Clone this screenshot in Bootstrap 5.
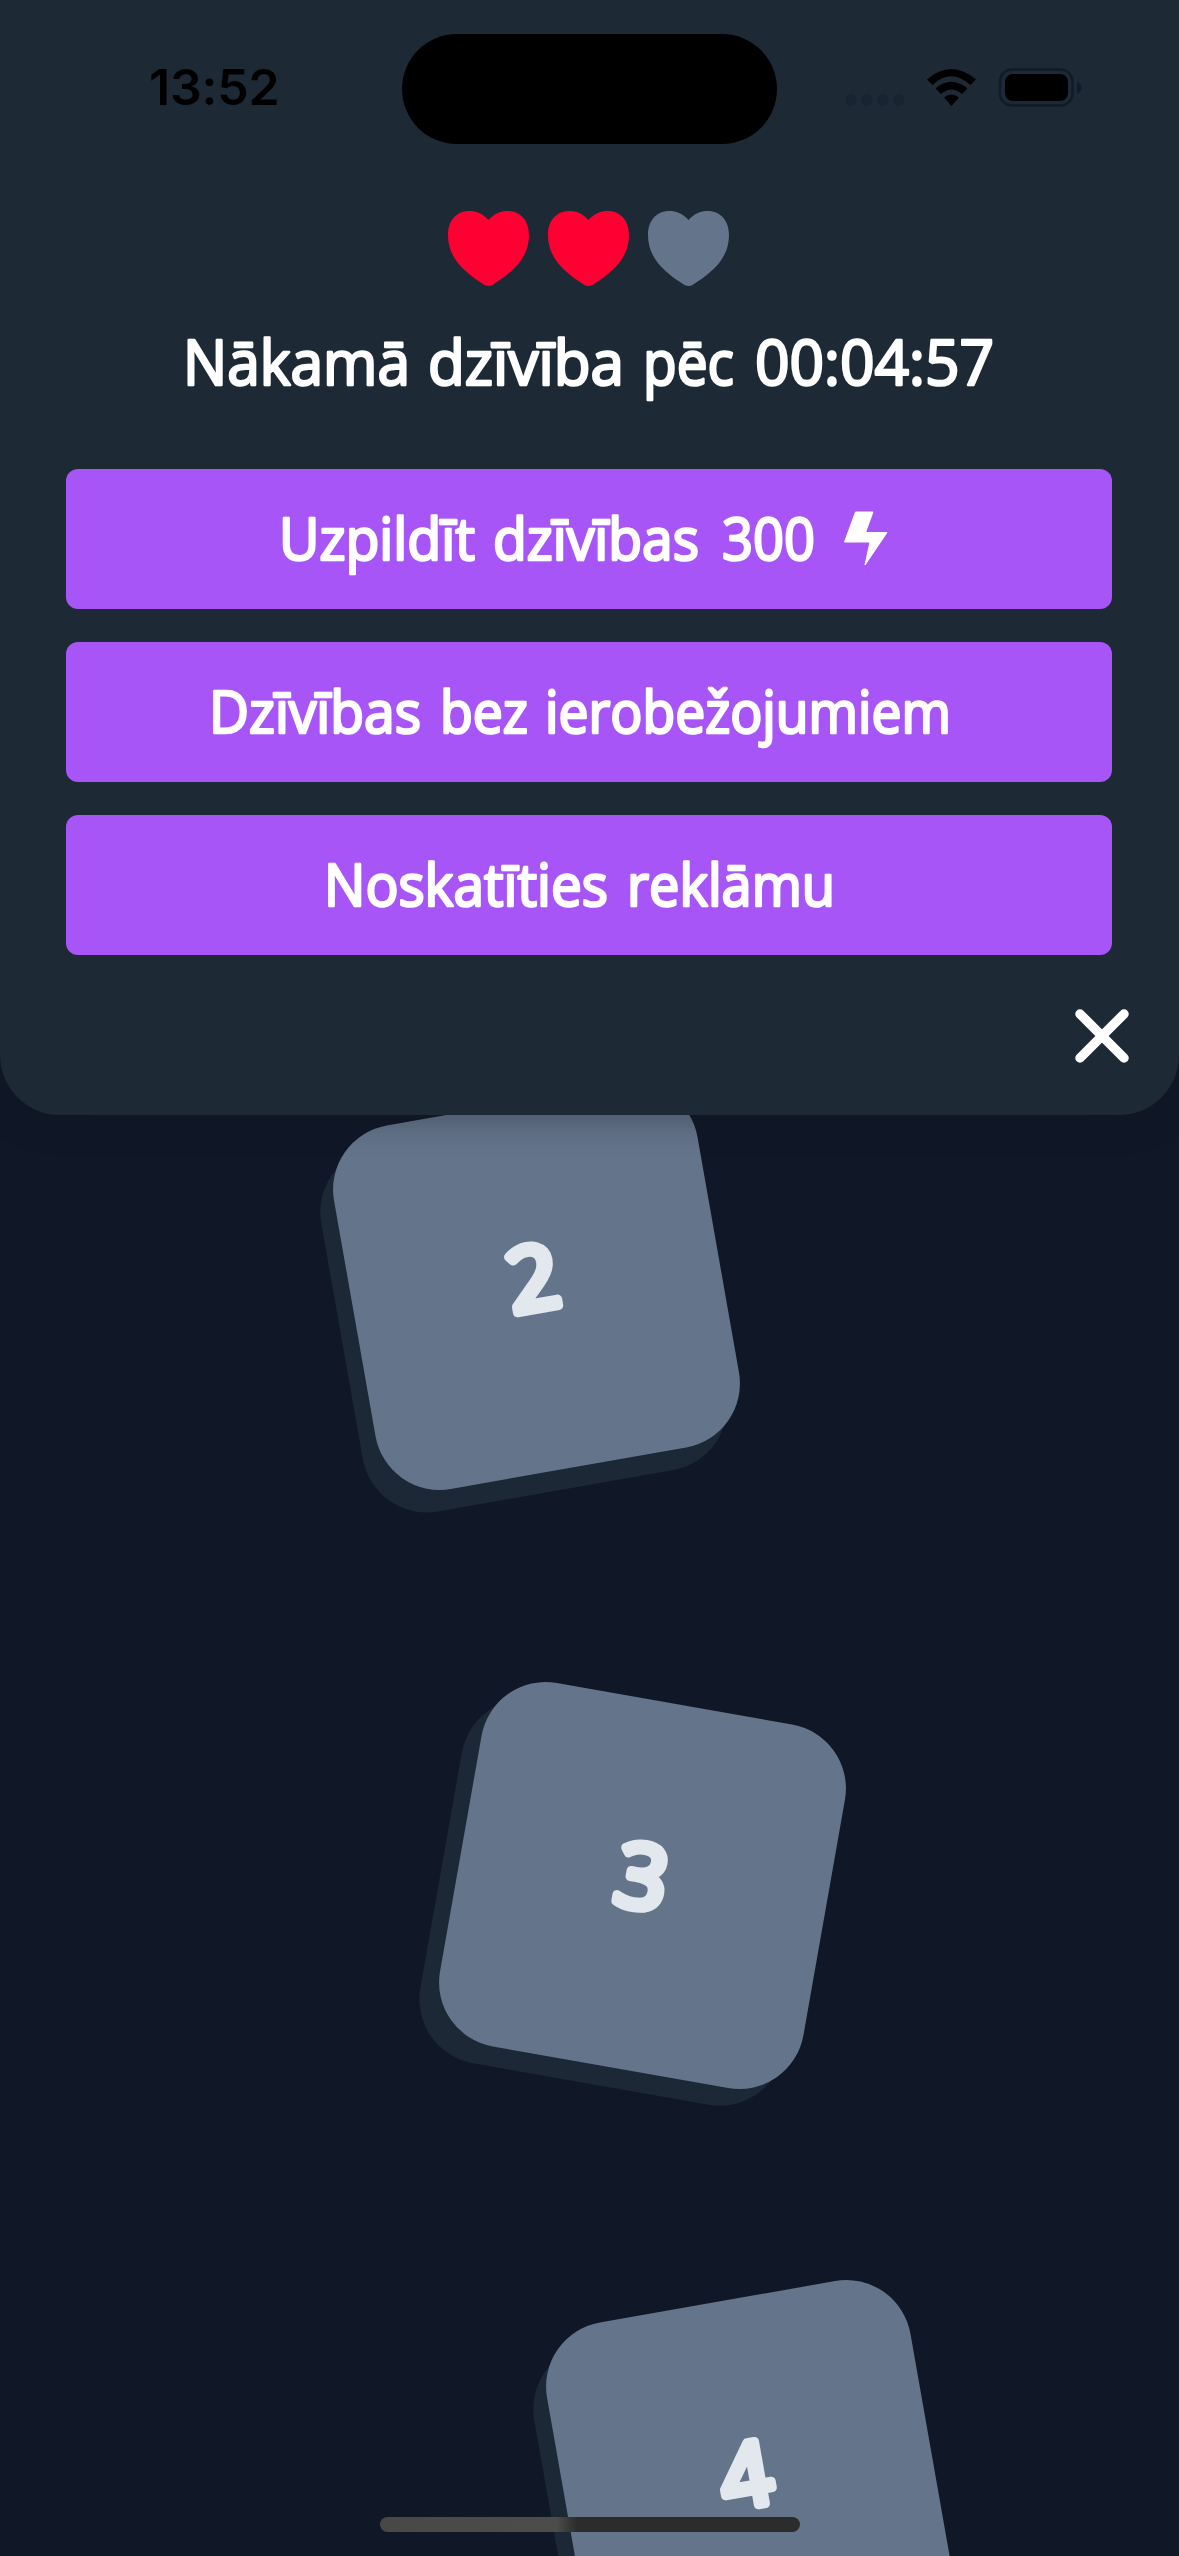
<!DOCTYPE html>
<html lang="lv">
<head>
<meta charset="utf-8">
<meta name="viewport" content="width=device-width, initial-scale=1">
<title>Dzīvības</title>
<link href="https://cdn.jsdelivr.net/npm/bootstrap@5.3.0/dist/css/bootstrap.min.css" rel="stylesheet">
<style>
  body { background: #101726; font-family: "Open Sans", "Noto Sans", sans-serif; }
  .game { width: 1179px; height: 2556px; background: #101726; }
  .life-panel { height: 1115px; background: #1e2936; border-radius: 0 0 60px 60px; box-shadow: 0 4px 34px rgba(16, 23, 32, .36); z-index: 2; }
  .status { height: 211px; padding: 34px 98px 0 149px; }
  .clock { font: 600 50px/1 Inter, sans-serif; color: #000; width: 253px; height: 110px; padding-top: 28px; letter-spacing: -.2px; }
  .island { width: 375px; height: 110px; background: #000; }
  .hearts { gap: 19px; height: 75px; padding-right: 2px; }
  .timer { height: 183px; }
  .actions { gap: 33px; padding: 0 67px 0 66px; }
  .btn-life { height: 140px; border: 0; border-radius: 12px; background: #a855f7; --bs-btn-hover-bg: #a855f7; padding: 0; }
  .foot { padding: 48px 44px 0 0; }
  .close-btn { border: 0; background: none; padding: 0; width: 66px; height: 66px; }
  text { font-family: "Open Sans", "Noto Sans", sans-serif; font-weight: 400; fill: #fff; stroke: #fff; stroke-width: 2.6; stroke-linejoin: round; stroke-linecap: round; }
  svg { display: block; overflow: visible; }
  .tile { width: 369px; height: 369px; border-radius: 65px; background: #64748b; box-shadow: -16.5px 20px 0 #1c2836; transform: rotate(-10deg); }
  .tile text { fill: #e2e8ee; stroke: #e2e8ee; stroke-width: 9; }
  .tile-2 { left: 352px; top: 1101.5px; }
  .tile-3 { left: 458px; top: 1701px; transform: rotate(10deg); }
  .tile-4 { left: 565px; top: 2299px; }
  .home-bar { left: 380px; top: 2517px; width: 420px; height: 15px; background: linear-gradient(90deg, #484947 0, #4c4d4a 42%, #2b2c2b 47%); z-index: 3; }
</style>
</head>
<body>
<main class="game position-relative overflow-hidden">
  <section class="life-panel position-relative">
    <div class="status d-flex align-items-start">
      <div class="clock">13:52</div>
      <div class="island rounded-pill"></div>
      <svg class="ms-auto" width="240" height="110" viewBox="841 34 240 110">
        <g fill="#192230"><circle cx="851" cy="100" r="5.5"/><circle cx="867" cy="100" r="5.5"/><circle cx="883" cy="100" r="5.5"/><circle cx="899" cy="100" r="5.5"/></g>
        <path d="M927 79.5Q951 58.500 976 79.500L970.500 85Q951 67.500 932.500 85ZM935.500 88.500Q951 75 967.500 88.500L962 94Q951 85 941 94ZM944 97.500Q951.500 91.500 959 97.500L951.500 106Z"/>
        <rect x="1000" y="69.500" width="72.500" height="36" rx="12" fill="none" stroke="#111a2a" stroke-width="2.500"/>
        <rect x="1005" y="74" width="63" height="27" rx="8"/>
        <path d="M1077 81.500Q1081.500 83.500 1081.500 87.500T1077 94Z" fill="#111a2a"/>
      </svg>
    </div>
    <div class="hearts d-flex justify-content-center">
      <svg width="81" height="75" viewBox="0 0 81 75"><path fill="#ff0033" d="M40.500 9C34 2 28 0 21.500 0C8 0 0 10 0 24C0 47 16 61 36.500 74Q40.500 76 44.500 74C65 61 81 47 81 24C81 10 73 0 59.500 0C53 0 47 2 40.500 9Z"/></svg>
      <svg width="81" height="75" viewBox="0 0 81 75"><path fill="#ff0033" d="M40.500 9C34 2 28 0 21.500 0C8 0 0 10 0 24C0 47 16 61 36.500 74Q40.500 76 44.500 74C65 61 81 47 81 24C81 10 73 0 59.500 0C53 0 47 2 40.500 9Z"/></svg>
      <svg width="81" height="75" viewBox="0 0 81 75"><path fill="#64748b" d="M40.500 9C34 2 28 0 21.500 0C8 0 0 10 0 24C0 47 16 61 36.500 74Q40.500 76 44.500 74C65 61 81 47 81 24C81 10 73 0 59.500 0C53 0 47 2 40.500 9Z"/></svg>
    </div>
    <div class="timer d-flex justify-content-center">
      <svg width="810" height="120" font-size="63">
        <text x="-2" y="99" textLength="227" lengthAdjust="spacingAndGlyphs">Nākamā</text>
        <text x="243" y="99" textLength="196" lengthAdjust="spacingAndGlyphs">dzīvība</text>
        <text x="458" y="99" textLength="91" lengthAdjust="spacingAndGlyphs">pēc</text>
        <text x="570" y="99" textLength="239" lengthAdjust="spacingAndGlyphs">00:04:57</text>
      </svg>
    </div>
    <div class="actions d-flex flex-column">
      <button class="btn btn-life">
        <svg width="1046" height="140" font-size="58">
          <text x="213" y="91" textLength="196" lengthAdjust="spacingAndGlyphs">Uzpildīt</text>
          <text x="427" y="91" textLength="206" lengthAdjust="spacingAndGlyphs">dzīvības</text>
          <text x="656" y="91" textLength="93" lengthAdjust="spacingAndGlyphs">300</text>
          <path fill="#fff" stroke="#fff" stroke-width="1" stroke-linejoin="round" d="M789.500 43H807L799.500 63.500H821L799 96L804 73H778.500Z"/>
        </svg>
      </button>
      <button class="btn btn-life">
        <svg width="1046" height="140" font-size="58">
          <text x="143" y="91" textLength="212" lengthAdjust="spacingAndGlyphs">Dzīvības</text>
          <text x="374" y="91" textLength="88" lengthAdjust="spacingAndGlyphs">bez</text>
          <text x="479" y="91" textLength="406" lengthAdjust="spacingAndGlyphs">ierobežojumiem</text>
        </svg>
      </button>
      <button class="btn btn-life">
        <svg width="1046" height="140" font-size="58">
          <text x="258" y="91" textLength="284" lengthAdjust="spacingAndGlyphs">Noskatīties</text>
          <text x="561" y="91" textLength="208" lengthAdjust="spacingAndGlyphs">reklāmu</text>
        </svg>
      </button>
    </div>
    <div class="foot d-flex justify-content-end">
      <button class="close-btn" aria-label="Aizvērt"><svg width="66" height="66"><path d="M11 11 55 55M55 11 11 55" fill="none" stroke="#fff" stroke-width="9.500" stroke-linecap="round"/></svg></button>
    </div>
  </section>
  <div class="tile tile-2 position-absolute"><svg width="369" height="369"><text x="157" y="207" font-size="88" textLength="51" lengthAdjust="spacingAndGlyphs">2</text></svg></div>
  <div class="tile tile-3 position-absolute"><svg width="369" height="369"><text x="157" y="207" font-size="88" textLength="51" lengthAdjust="spacingAndGlyphs">3</text></svg></div>
  <div class="tile tile-4 position-absolute"><svg width="369" height="369"><text x="157" y="207" font-size="88" textLength="51" lengthAdjust="spacingAndGlyphs">4</text></svg></div>
  <div class="home-bar position-absolute rounded-pill"></div>
</main>
<script src="https://cdn.jsdelivr.net/npm/bootstrap@5.3.0/dist/js/bootstrap.bundle.min.js"></script>
</body>
</html>
